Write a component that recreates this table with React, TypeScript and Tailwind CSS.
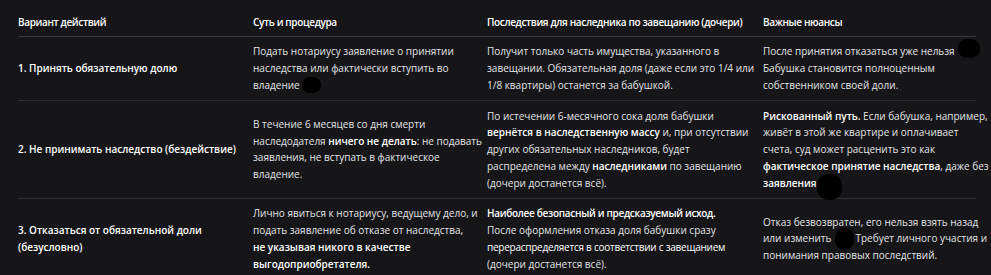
import React from "react";

const B = ({ children }: { children: React.ReactNode }) => (
  <span className="font-semibold text-white">{children}</span>
);

const Blob = ({ className }: { className: string }) => (
  <span className="relative inline-block w-0 h-0 align-baseline">
    <span className={`absolute bg-black rounded-[45%] ${className}`} />
  </span>
);

const Lines = ({ lines }: { lines: React.ReactNode[] }) => (
  <div>
    {lines.map((l, i) => (
      <div key={i} className="whitespace-nowrap">
        {l}
      </div>
    ))}
  </div>
);

type Row = {
  c1: React.ReactNode[];
  c2: React.ReactNode[];
  c3: React.ReactNode[];
  c4: React.ReactNode[];
};

const rows: Row[] = [
  {
    c1: [<B>1. Принять обязательную долю</B>],
    c2: [
      "Подать нотариусу заявление о принятии",
      "наследства или фактически вступить во",
      <>
        владение
        <Blob className="left-[2px] -top-[12px] w-[19px] h-[16px]" />
      </>,
    ],
    c3: [
      "Получит только часть имущества, указанного в",
      "завещании. Обязательная доля (даже если это 1/4 или",
      "1/8 квартиры) останется за бабушкой.",
    ],
    c4: [
      <>
        После принятия отказаться уже нельзя
        <Blob className="left-[3px] -top-[16px] w-[22px] h-[19px]" />
      </>,
      "Бабушка становится полноценным",
      "собственником своей доли.",
    ],
  },
  {
    c1: [<B>2. Не принимать наследство (бездействие)</B>],
    c2: [
      "В течение 6 месяцев со дня смерти",
      <>
        наследодателя <B>ничего не делать</B>: не подавать
      </>,
      "заявления, не вступать в фактическое",
      "владение.",
    ],
    c3: [
      "По истечении 6‑месячного сока доля бабушки",
      <>
        <B>вернётся в наследственную массу</B> и, при отсутствии
      </>,
      "других обязательных наследников, будет",
      <>
        распределена между <B>наследниками</B> по завещанию
      </>,
      "(дочери достанется всё).",
    ],
    c4: [
      <>
        <B>Рискованный путь.</B> Если бабушка, например,
      </>,
      "живёт в этой же квартире и оплачивает",
      "счета, суд может расценить это как",
      <>
        <B>фактическое принятие наследства</B>, даже без
      </>,
      <>
        <B>заявления</B>
        <Blob className="left-0 -top-[13px] w-[25px] h-[26px]" />
      </>,
    ],
  },
  {
    c1: [<B>3. Отказаться от обязательной доли</B>, <B>(безусловно)</B>],
    c2: [
      "Лично явиться к нотариусу, ведущему дело, и",
      "подать заявление об отказе от наследства,",
      <B>не указывая никого в качестве</B>,
      <B>выгодоприобретателя.</B>,
    ],
    c3: [
      <span className="font-semibold text-white tracking-[-0.3px]">
        Наиболее безопасный и предсказуемый исход.
      </span>,
      "После оформления отказа доля бабушки сразу",
      <span className="font-medium text-white tracking-[-0.25px]">
        перераспределяется в соответствии с завещанием
      </span>,
      "(дочери достанется всё).",
    ],
    c4: [
      "Отказ безвозвратен, его нельзя взять назад",
      <>
        или изменить
        <Blob className="left-[4px] -top-[14px] w-[19px] h-[22px]" />
        <span className="inline-block w-[24px]" />
        Требует личного участия и
      </>,
      "понимания правовых последствий.",
    ],
  },
];

export default function App() {
  return (
    <div
      className="w-[991px] h-[275px] overflow-hidden bg-[#161618] text-[#e4e4e6] text-[10px] leading-[16.75px]"
      style={{ fontFamily: '"Open Sans", "Noto Sans", sans-serif' }}
    >
      <div className="ml-[18px] w-[958px] grid grid-cols-[235px_234px_276px_213px]">
        {["Вариант действий", "Суть и процедура", "Последствия для наследника по завещанию (дочери)", "Важные нюансы"].map(
          (h, i) => (
            <div
              key={i}
              className="pt-[14px] pb-[5px] border-b border-[#3b3b3e] font-semibold text-white whitespace-nowrap tracking-[-0.35px]"
            >
              {h}
            </div>
          )
        )}
        {rows.map((r, ri) => (
          <React.Fragment key={ri}>
            {[r.c1, r.c2, r.c3, r.c4].map((c, ci) => (
              <div
                key={ci}
                className="py-[6.5px] border-b border-[#2e2e31] flex items-center"
              >
                <Lines lines={c} />
              </div>
            ))}
          </React.Fragment>
        ))}
      </div>
    </div>
  );
}
